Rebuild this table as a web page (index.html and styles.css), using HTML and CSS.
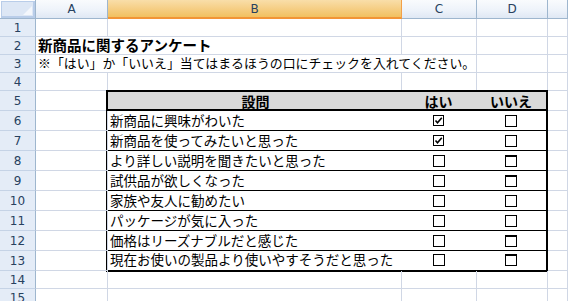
FILE: index.html
```html
<!DOCTYPE html>
<html lang="ja">
<head>
<meta charset="utf-8">
<title>新商品に関するアンケート</title>
<link rel="stylesheet" href="styles.css">
</head>
<body>
<div class="sheet">
  <!-- column headers -->
  <div class="corner"><span class="corner-tri"></span></div>
  <div class="colhead">A</div>
  <div class="colhead selected">B</div>
  <div class="colhead">C</div>
  <div class="colhead">D</div>
  <div class="colhead"></div>

  <!-- row 1 -->
  <div class="rowhead">1</div>
  <div class="cell"></div><div class="cell"></div><div class="cell"></div><div class="cell"></div><div class="cell"></div>

  <!-- row 2 -->
  <div class="rowhead">2</div>
  <div class="cell span-ab title">新商品に関するアンケート</div>
  <div class="cell"></div><div class="cell"></div><div class="cell"></div>

  <!-- row 3 -->
  <div class="rowhead">3</div>
  <div class="cell span-ac note">※「はい」か「いいえ」当てはまるほうの口にチェックを入れてください。</div>
  <div class="cell"></div><div class="cell"></div>

  <!-- row 4 -->
  <div class="rowhead">4</div>
  <div class="cell"></div><div class="cell"></div><div class="cell"></div><div class="cell"></div><div class="cell"></div>

  <!-- rows 5-13 -->
  <div class="rowhead tall">5</div>
  <div class="cell tall"></div>
  <div class="survey">
    <div class="q-row q-head">
      <div class="q-text">設問</div>
      <div class="q-opt">はい</div>
      <div class="q-opt">いいえ</div>
    </div>
    <div class="q-row">
      <div class="q-text">新商品に興味がわいた</div>
      <div class="q-opt"><span class="box checked"><svg viewBox="0 0 9 9" width="9" height="9"><path d="M1.5 4.5 L3.5 6.8 L7.8 1.8" fill="none" stroke="#000" stroke-width="1.6"/></svg></span></div>
      <div class="q-opt"><span class="box"></span></div>
    </div>
    <div class="q-row">
      <div class="q-text">新商品を使ってみたいと思った</div>
      <div class="q-opt"><span class="box checked"><svg viewBox="0 0 9 9" width="9" height="9"><path d="M1.5 4.5 L3.5 6.8 L7.8 1.8" fill="none" stroke="#000" stroke-width="1.6"/></svg></span></div>
      <div class="q-opt"><span class="box"></span></div>
    </div>
    <div class="q-row">
      <div class="q-text">より詳しい説明を聞きたいと思った</div>
      <div class="q-opt"><span class="box"></span></div>
      <div class="q-opt"><span class="box heavy"></span></div>
    </div>
    <div class="q-row">
      <div class="q-text">試供品が欲しくなった</div>
      <div class="q-opt"><span class="box"></span></div>
      <div class="q-opt"><span class="box heavy"></span></div>
    </div>
    <div class="q-row">
      <div class="q-text">家族や友人に勧めたい</div>
      <div class="q-opt"><span class="box"></span></div>
      <div class="q-opt"><span class="box"></span></div>
    </div>
    <div class="q-row">
      <div class="q-text">パッケージが気に入った</div>
      <div class="q-opt"><span class="box"></span></div>
      <div class="q-opt"><span class="box"></span></div>
    </div>
    <div class="q-row">
      <div class="q-text">価格はリーズナブルだと感じた</div>
      <div class="q-opt"><span class="box"></span></div>
      <div class="q-opt"><span class="box heavy"></span></div>
    </div>
    <div class="q-row q-last">
      <div class="q-text">現在お使いの製品より使いやすそうだと思った</div>
      <div class="q-opt"><span class="box"></span></div>
      <div class="q-opt"><span class="box heavy"></span></div>
    </div>
  </div>
  <div class="cell tall"></div>

  <div class="rowhead tall">6</div><div class="cell tall"></div><div class="cell tall"></div>
  <div class="rowhead tall">7</div><div class="cell tall"></div><div class="cell tall"></div>
  <div class="rowhead tall">8</div><div class="cell tall"></div><div class="cell tall"></div>
  <div class="rowhead tall">9</div><div class="cell tall"></div><div class="cell tall"></div>
  <div class="rowhead tall">10</div><div class="cell tall"></div><div class="cell tall"></div>
  <div class="rowhead tall">11</div><div class="cell tall"></div><div class="cell tall"></div>
  <div class="rowhead tall">12</div><div class="cell tall"></div><div class="cell tall"></div>
  <div class="rowhead tall">13</div><div class="cell tall"></div><div class="cell tall"></div>

  <!-- row 14 -->
  <div class="rowhead">14</div>
  <div class="cell"></div><div class="cell"></div><div class="cell"></div><div class="cell"></div><div class="cell"></div>

  <!-- row 15 -->
  <div class="rowhead">15</div>
  <div class="cell"></div><div class="cell"></div><div class="cell"></div><div class="cell"></div><div class="cell"></div>
</div>
</body>
</html>
```

FILE: styles.css
```css
html, body {
  margin: 0;
  padding: 0;
  background: #fff;
  overflow: hidden;
}

.sheet {
  display: grid;
  grid-template-columns: 36px 72px 294px 75px 71px 1fr;
  grid-template-rows: 19px repeat(4, 18px) repeat(9, 20px) 18px 18px;
  width: 568px;
  font-family: "Noto Sans CJK JP", "Noto Sans", sans-serif;
  color: #000;
}

/* header strip */
.corner {
  position: relative;
  background: #dde7f5;
  border-right: 1px solid #9eb6ce;
  border-bottom: 1px solid #9eb6ce;
  box-shadow: inset 1px 1px 0 #fff, inset 0 0 0 2px #b9cde9;
}
.corner-tri {
  position: absolute;
  right: 3px;
  bottom: 3px;
  width: 0;
  height: 0;
  border-left: 9px solid transparent;
  border-bottom: 9px solid #f4f7fc;
}

.colhead {
  display: flex;
  align-items: center;
  justify-content: center;
  background: linear-gradient(#f9fbfd, #eef3fa 55%, #dfe8f4);
  border-right: 1px solid #9eb6ce;
  border-bottom: 1px solid #9eb6ce;
  font-family: "DejaVu Sans", "Liberation Sans", sans-serif;
  font-size: 12px;
  color: #27415f;
}
.colhead.selected {
  background: linear-gradient(#f9dea9, #f5cd82 55%, #f1c15f);
  border-bottom: 2px solid #f29536;
  border-right-color: #f2a048;
}

.rowhead {
  display: flex;
  align-items: center;
  justify-content: center;
  background: #e4ecf7;
  border-right: 1px solid #9eb6ce;
  border-bottom: 1px solid #c5d3e6;
  font-family: "DejaVu Sans", "Liberation Sans", sans-serif;
  font-size: 12px;
  color: #27415f;
}

.cell {
  border-right: 1px solid #d0d7e5;
  border-bottom: 1px solid #d0d7e5;
  white-space: nowrap;
}

.span-ab { grid-column: 2 / span 2; }
.span-ac { grid-column: 2 / span 3; }

.title,
.note {
  display: flex;
  align-items: center;
  padding-left: 2px;
  line-height: 1;
}
.title {
  font-size: 14.5px;
  font-weight: bold;
}
.note { font-size: 12.9px; }

/* survey table: B5:D13 */
.survey {
  grid-column: 3 / span 3;
  grid-row: 6 / span 9;
  margin: -1px 0 -1px -2px;
  border: 2px solid #000;
  background: #fff;
  display: flex;
  flex-direction: column;
}

.q-row {
  display: grid;
  grid-template-columns: 293px 75px 1fr;
  align-items: center;
  height: 19px;
  border-bottom: 1px solid #000;
  font-size: 13.5px;
  line-height: 1;
}
.q-head {
  height: 17px;
  border-bottom-width: 2px;
  background: #d9d9d9;
  font-size: 14px;
  font-weight: bold;
}
.q-head .q-text { text-align: center; }
.q-last {
  height: 18px;
  border-bottom: 0;
}

.q-text {
  padding-left: 2px;
  white-space: nowrap;
}
.q-opt {
  display: flex;
  justify-content: center;
}

.box {
  box-sizing: border-box;
  display: flex;
  align-items: center;
  justify-content: center;
  width: 12px;
  height: 12px;
  border: 1px solid #000;
  background: #fff;
}
.box.heavy { border-top-width: 2px; }
.box.checked {
  width: 11px;
  height: 11px;
}
```
